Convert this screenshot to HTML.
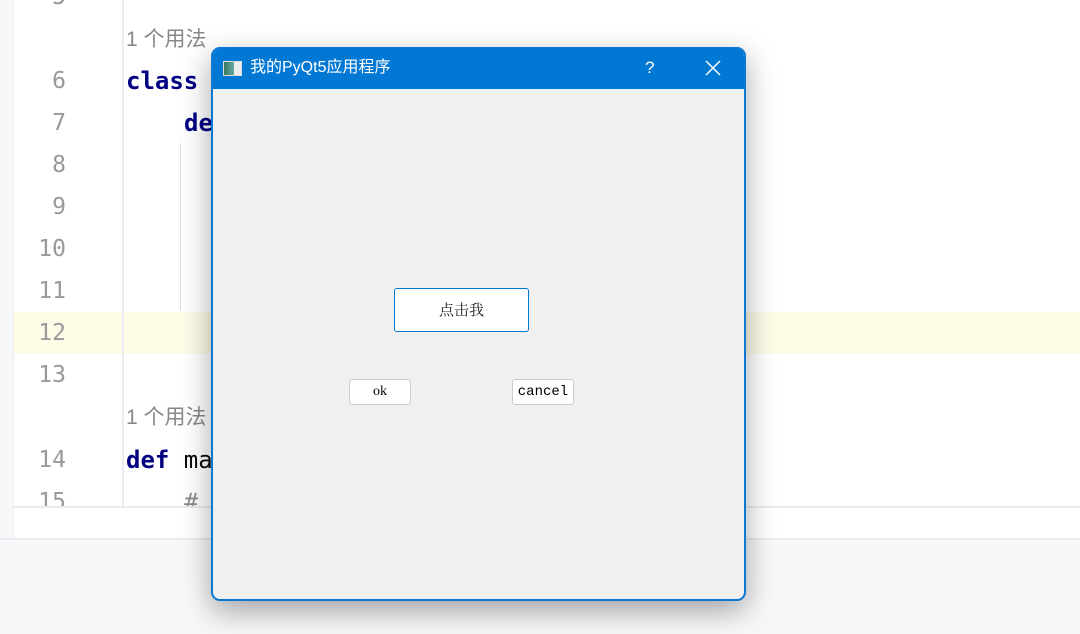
<!DOCTYPE html>
<html><head><meta charset="utf-8"><style>
*{margin:0;padding:0;box-sizing:border-box}
body{width:1080px;height:634px;overflow:hidden;background:#fff;position:relative;font-family:"Liberation Sans","Noto Sans CJK SC",sans-serif}
.a{position:absolute}
.ln{position:absolute;width:66px;text-align:right;left:0;font-family:"DejaVu Sans Mono",monospace;font-size:23px;color:#999;line-height:42px}
.code{position:absolute;left:126px;font-family:"DejaVu Sans Mono",monospace;font-size:24px;line-height:42px;color:#080808}
.kw{color:#000080;font-weight:bold}
.hint{position:absolute;left:126px;font-size:21px;color:#888;line-height:42px;font-family:"Liberation Sans","Noto Sans CJK SC",sans-serif}
</style></head><body>
<div class="a" style="left:0;top:0;width:14px;height:540px;background:#f7f8fa;border-right:1px solid #ebecf0"></div>
<div class="a" style="left:14px;top:312px;width:1066px;height:42px;background:#fefbe7"></div>
<div class="a" style="left:122px;top:0;width:2px;height:506px;background:#ebecf0"></div>
<div class="a" style="left:180px;top:143px;width:1px;height:167px;background:#dcdcdc"></div>
<div class="ln" style="top:-24px">5</div>
<div class="ln" style="top:60px">6</div>
<div class="ln" style="top:102px">7</div>
<div class="ln" style="top:144px">8</div>
<div class="ln" style="top:186px">9</div>
<div class="ln" style="top:228px">10</div>
<div class="ln" style="top:270px">11</div>
<div class="ln" style="top:312px">12</div>
<div class="ln" style="top:354px">13</div>
<div class="ln" style="top:439px">14</div>
<div class="ln" style="top:481px;height:25px;overflow:hidden">15</div>
<div class="hint" style="top:19px">1 个用法</div>
<div class="hint" style="top:397px">1 个用法</div>
<div class="code" style="top:60px"><span class="kw">class</span></div>
<div class="code" style="top:102px;left:184px"><span class="kw">de</span></div>
<div class="code" style="top:439px"><span class="kw">def</span> ma</div>
<div class="code" style="top:481px;left:184px;color:#8c8c8c;height:25px;overflow:hidden">#</div>
<div class="a" style="left:14px;top:506px;width:1066px;height:2px;background:#ebecf0"></div>
<div class="a" style="left:0;top:538px;width:1080px;height:96px;background:#f7f8fa;border-top:2px solid #ebecf0"></div>
<div class="a" style="left:211px;top:47px;width:535px;height:554px;border-radius:9px;background:#f0f0f0;border:2px solid #0a78d4;box-shadow:0 10px 30px rgba(0,0,0,.35);overflow:hidden">
<div class="a" style="left:0;top:0;width:100%;height:40px;background:#0078d4"></div>
<div class="a" style="left:10px;top:12px;width:19px;height:15px;border:1px solid #ddd;background:linear-gradient(90deg,#3a7a5a 0,#6aa 60%,#eee 60%)"></div>
<div class="a" style="left:37px;top:9px;color:#fff;font-size:16px;line-height:20px">我的PyQt5应用程序</div>
<div class="a" style="left:432px;top:9px;color:#fff;font-size:17px">?</div>
<svg class="a" style="left:492px;top:11px" width="16" height="16"><path d="M1 1L15 15M15 1L1 15" stroke="#fff" stroke-width="1.5"/></svg>
<div class="a" style="left:181px;top:239px;width:135px;height:44px;background:#fff;border:1px solid #0078d4;border-radius:3px;text-align:center;line-height:42px;font-size:15px;font-family:'Noto Serif CJK SC',serif;color:#222">点击我</div>
<div class="a" style="left:136px;top:330px;width:62px;height:26px;background:#fff;border:1px solid #ccc;border-radius:3px;text-align:center;line-height:24px;font-size:14px;font-family:'Liberation Serif',serif">ok</div>
<div class="a" style="left:299px;top:330px;width:62px;height:26px;background:#fff;border:1px solid #ccc;border-radius:3px;text-align:center;line-height:24px;font-size:14px;font-family:'Liberation Mono',monospace">cancel</div>
</div>
</body></html>
